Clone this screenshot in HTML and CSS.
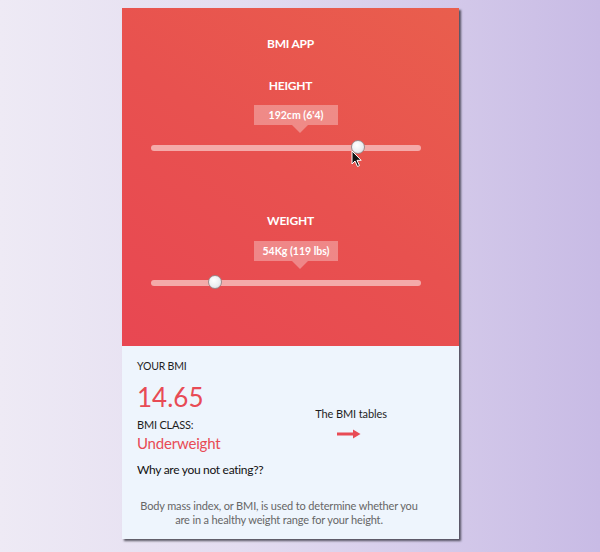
FILE: index.html
```html
<!DOCTYPE html>
<html lang="en">
<head>
<meta charset="utf-8">
<title>BMI App</title>
<link rel="stylesheet" href="styles.css">
</head>
<body>
<div class="card">
  <section class="top">
    <h1 class="title">BMI APP</h1>
    <h2 class="label">HEIGHT</h2>
    <div class="tip">192cm (6'4)</div>
    <div class="track track-h">
      <span class="thumb thumb-h"></span>
      <svg class="cursor" width="12" height="18" viewBox="0 0 12 18"><path d="M1 1 L1 14 L4 11 L6.5 16.5 L8.5 15.6 L6 10.3 L10.2 10.3 Z" fill="#111" stroke="#fff" stroke-width="1"/></svg>
    </div>
    <h2 class="label label-w">WEIGHT</h2>
    <div class="tip tip-w">54Kg (119 lbs)</div>
    <div class="track track-w">
      <span class="thumb thumb-w"></span>
    </div>
  </section>
  <section class="bottom">
    <div class="result">
      <div class="left">
        <div class="small">YOUR BMI</div>
        <div class="bmi">14.65</div>
        <div class="cls-label">BMI CLASS:</div>
        <div class="cls">Underweight</div>
        <div class="msg">Why are you not eating??</div>
      </div>
      <div class="right">
        <div class="tables">The BMI tables</div>
        <svg class="arrow" width="24" height="10" viewBox="0 0 24 10"><rect x="0" y="3.5" width="17" height="3" fill="#e84b55"/><path d="M16 0.5 L23.5 5 L16 9.5 Z" fill="#e84b55"/></svg>
      </div>
    </div>
    <p class="desc">Body mass index, or BMI, is used to determine whether you are in a healthy weight range for your height.</p>
  </section>
</div>
</body>
</html>
```

FILE: styles.css
```css
html, body {
  margin: 0;
  padding: 0;
}
body {
  width: 600px;
  height: 552px;
  overflow: hidden;
  background: linear-gradient(to right, #eeeaf5 0%, #e3dcf0 40%, #c8bbe5 100%);
  font-family: "Lato", "Liberation Sans", sans-serif;
  padding: 8px 0 0 122px;
  box-sizing: border-box;
}
.card {
  width: 337px;
  box-shadow: 2px 2px 2px rgba(40, 40, 50, 0.75);
}
.top {
  height: 338px;
  box-sizing: border-box;
  padding-top: 28px;
  background: linear-gradient(35deg, #e84752 0%, #e8514f 50%, #e95e4d 100%);
  color: #fff;
}
.title, .label {
  margin: 0;
  font-size: 12px;
  line-height: 16px;
  letter-spacing: -0.2px;
  font-weight: 700;
  text-align: center;
}
.label {
  margin-top: 26px;
}
.label-w {
  margin-top: 62px;
}
.tip {
  position: relative;
  margin: 11px 0 0 132px;
  width: 84px;
  height: 20px;
  line-height: 20px;
  text-align: center;
  font-size: 10.5px;
  font-weight: 700;
  color: #fff;
  background: rgba(255, 255, 255, 0.32);
}
.tip::after {
  content: "";
  position: absolute;
  left: 38px;
  top: 20px;
  border-left: 8px solid transparent;
  border-right: 8px solid transparent;
  border-top: 8px solid rgba(255, 255, 255, 0.32);
}
.tip-w {
  margin-top: 12px;
}
.track {
  position: relative;
  margin: 20px 0 0 29px;
  width: 270px;
  height: 6px;
  border-radius: 3px;
  background: #f4aaa9;
}
.track-w {
  margin-top: 19px;
}
.thumb {
  position: absolute;
  top: -5px;
  width: 14px;
  height: 14px;
  border-radius: 50%;
  box-sizing: border-box;
  border: 1px solid #9a8a8c;
  background: radial-gradient(circle at 40% 35%, #ffffff 0%, #eceef2 55%, #d4d6dc 100%);
}
.thumb-h { left: 200px; }
.thumb-w { left: 57px; }
.cursor {
  position: absolute;
  left: 200px;
  top: 5px;
}
.bottom {
  height: 193px;
  box-sizing: border-box;
  padding: 13px 38px 0 15px;
  background: #eef5fd;
  color: #1e1e1e;
}
.result {
  display: flex;
}
.left {
  width: 178px;
}
.small {
  font-size: 10.5px;
  line-height: 14px;
  letter-spacing: -0.2px;
}
.bmi {
  margin-top: 9px;
  font-size: 26px;
  line-height: 30px;
  color: #e84b55;
}
.cls-label {
  margin-top: 6px;
  font-size: 11px;
  line-height: 14px;
  letter-spacing: -0.2px;
}
.cls {
  margin-top: 2px;
  font-size: 15px;
  line-height: 18px;
  letter-spacing: -0.2px;
  color: #e84b55;
}
.msg {
  margin-top: 10px;
  font-size: 12px;
  line-height: 16px;
  letter-spacing: -0.3px;
  color: #111;
}
.right {
  margin-top: 48px;
  width: 72px;
  display: flex;
  flex-direction: column;
  align-items: center;
}
.tables {
  font-size: 11px;
  line-height: 14px;
  letter-spacing: -0.1px;
  white-space: nowrap;
}
.arrow {
  margin-top: 8px;
  margin-left: -4px;
}
.desc {
  margin: 21px 0 0 0;
  font-size: 11px;
  line-height: 14px;
  letter-spacing: -0.15px;
  text-align: center;
  color: #666;
}
```
